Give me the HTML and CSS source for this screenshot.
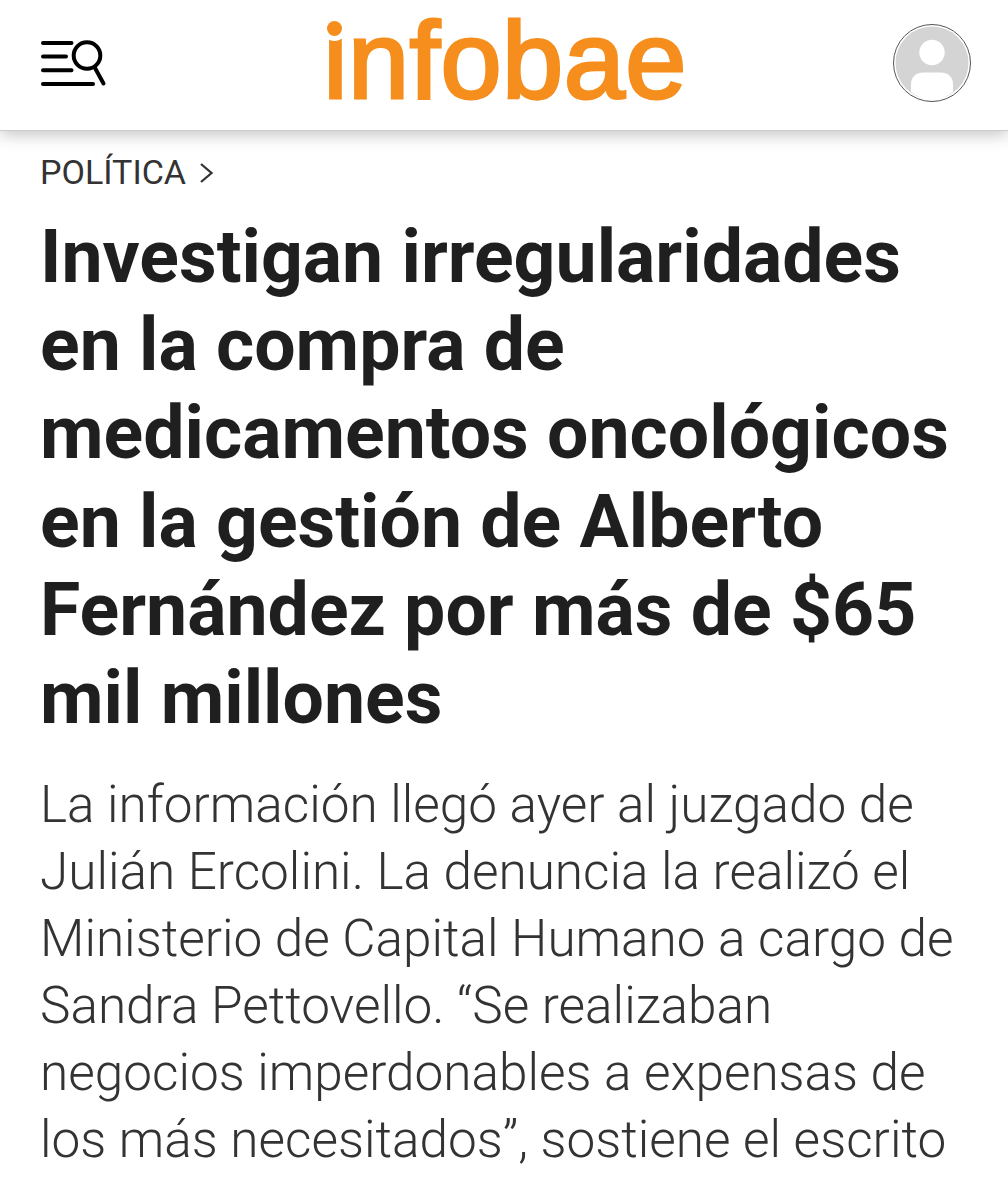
FILE: index.html
```html
<!DOCTYPE html>
<html lang="es">
<head>
  <meta charset="UTF-8">
  <meta name="viewport" content="width=device-width, initial-scale=1.0">
  <title>Infobae</title>
  <link rel="stylesheet" href="styles.css">
</head>
<body>
  <header class="header">
    <a href="#" class="menu" aria-label="Menú">
      <svg width="66" height="48" viewBox="0 0 66 48" fill="none" stroke="#000" stroke-width="4" stroke-linecap="round">
        <path d="M2 4H30.500M2 17.500H25M2 31.300H30.500M2 45H52"/>
        <circle cx="46" cy="16.500" r="13.300"/>
        <path d="M54 29L62.500 44.500"/>
      </svg>
    </a>
    <a href="#" class="logo">infobae</a>
    <a href="#" class="user" aria-label="Usuario">
      <svg width="80" height="80" viewBox="0 0 80 80">
        <circle cx="40" cy="40" r="38.500" fill="#fff" stroke="#555" stroke-width="1"/>
        <circle cx="40" cy="40" r="36.500" fill="#d4d4d4"/>
        <circle cx="40" cy="29.500" r="12.700" fill="#fff"/>
        <path d="M19 69V62Q19 49.500 32 49.500H48Q61 49.500 61 62V69Q40 85 19 69Z" fill="#fff"/>
      </svg>
    </a>
  </header>

  <main class="article">
    <a href="#" class="section">POLÍTICA
      <svg width="14" height="22" viewBox="0 0 14 22" fill="none" stroke="#333" stroke-width="2.300">
        <path d="M1 3L11.500 12L1 21"/>
      </svg>
    </a>
    <h1 class="title">Investigan irregularidades<br>en la compra de<br>medicamentos oncológicos<br>en la gestión de Alberto<br>Fernández por más de $65<br>mil millones</h1>
    <h2 class="subtitle">La información llegó ayer al juzgado de<br>Julián Ercolini. La denuncia la realizó el<br>Ministerio de Capital Humano a cargo de<br>Sandra Pettovello. “Se realizaban<br>negocios imperdonables a expensas de<br>los más necesitados”, sostiene el escrito</h2>
  </main>
</body>
</html>
```
FILE: styles.css
```css
body {
  font-family: Roboto, sans-serif;
  margin: 0;
  background-color: #fff;
  color: #1f1f1f;
}
a {
  color: inherit;
  text-decoration: none;
}
svg {
  display: block;
}
.header {
  display: flex;
  justify-content: space-between;
  box-sizing: border-box;
  height: 131px;
  padding: 0 36.5px 0 40.5px;
  border-bottom: 1px solid #ccc;
  box-shadow: 0 3px 16px rgba(0, 0, 0, 0.25);
}
.menu {
  margin-top: 39px;
}
.logo {
  position: relative;
  margin-top: -5px;
  margin-left: 12px;
  height: 129px;
  font-family: "Liberation Sans", Arial, sans-serif;
  font-size: 110px;
  line-height: 129px;
  letter-spacing: 0.4px;
  color: #f68e1e;
  -webkit-text-stroke: 3px #f68e1e;
}
/* round dot of the i */
.logo::before {
  content: "";
  position: absolute;
  left: 2px;
  top: 15px;
  width: 18px;
  height: 14px;
  background-color: #fff;
}
.logo::after {
  content: "";
  position: absolute;
  left: 3.5px;
  top: 26px;
  width: 15px;
  height: 15px;
  border-radius: 50%;
  background-color: #f68e1e;
  box-shadow: 0 0 0 5px #fff;
}
.user {
  margin-top: 23px;
}
.article {
  padding: 20px 40px 0;
}
.section {
  display: flex;
  align-items: center;
  gap: 14px;
  font-size: 34.1px;
  line-height: 42px;
  color: #333;
}
.title {
  margin: 20px 0 0;
  font-size: 73.4px;
  line-height: 88.200px;
  font-weight: 700;
  white-space: nowrap;
}
.subtitle {
  margin: 29px 0 0;
  font-size: 51.3px;
  line-height: 67px;
  font-weight: 300;
  color: #333;
  white-space: nowrap;
}
```
